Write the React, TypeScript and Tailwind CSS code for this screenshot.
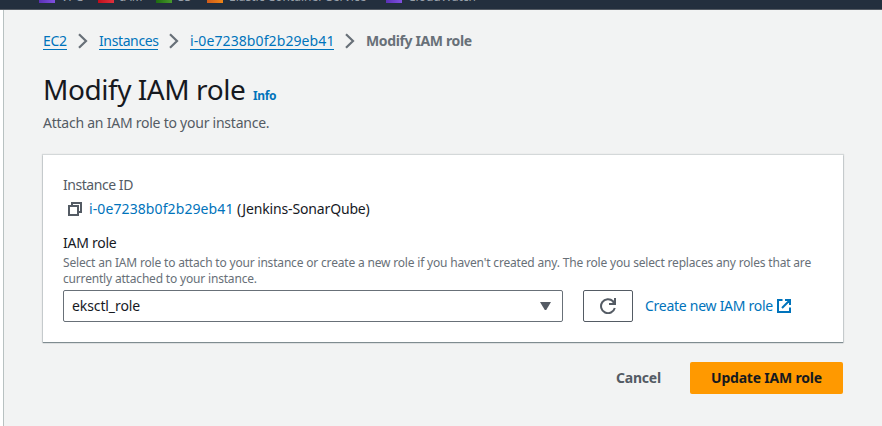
import React from "react";

const Chevron = () => (
  <svg className="mx-[11px] shrink-0" width="10" height="16" viewBox="0 0 10 16" fill="none" stroke="#687078" strokeWidth="2.2">
    <path d="M1 1.2 8 8 1 14.8" />
  </svg>
);

const services = [
  { label: "VPC", color: "from-[#5a30b5] to-[#8050e0]", box: "w-[59px]" },
  { label: "IAM", color: "from-[#c00c1a] to-[#e0303d]", box: "w-[58px]" },
  { label: "S3", color: "from-[#1d6b10] to-[#479a2c]", box: "w-[51px]" },
  { label: "Elastic Container Service", color: "from-[#cf5a1a] to-[#ee8516]", box: "w-[179px]" },
  { label: "CloudWatch", color: "from-[#5a30b5] to-[#8050e0]", box: "w-[100px]" },
];

const crumb = "mb-px h-[19px] border-b border-[#0073bb] whitespace-nowrap";

export default function App() {
  return (
    <div className="h-[426px] w-[882px] overflow-hidden bg-white font-['Noto_Sans',sans-serif] text-[14px] leading-[20px] text-[#16191f]">
      <header className="flex h-[10px] items-end overflow-hidden border-b border-[#545b64] bg-[#232f3e] pl-[39px]">
        {services.map((s) => (
          <div key={s.label} className={`flex h-[9px] shrink-0 items-end gap-[6px] pb-[6px] ${s.box}`}>
            <span className={`h-[16px] w-[16px] shrink-0 bg-linear-to-r ${s.color}`} />
            <span className="text-[12px] leading-[12px] whitespace-nowrap text-[#98a0aa]">{s.label}</span>
          </div>
        ))}
      </header>
      <main className="ml-[3px] h-[416px] border-l border-[#b8c1c1] bg-[#f2f3f3] pt-[21px] pl-[39px]">
        <nav className="flex h-[20px] items-center text-[#0073bb]">
          <a className={`${crumb} w-[24px] tracking-[-0.35px]`}>EC2</a>
          <Chevron />
          <a className={`${crumb} w-[59px] tracking-[-0.38px]`}>Instances</a>
          <Chevron />
          <a className={`${crumb} w-[144px] tracking-[0.1px]`}>i-0e7238b0f2b29eb41</a>
          <Chevron />
          <span className="font-bold tracking-[-0.37px] text-[#687078]">Modify IAM role</span>
        </nav>
        <div className="mt-[20px] flex h-[36px] items-baseline">
          <h1 className="w-[202px] text-[28px] leading-[36px] tracking-[-0.45px] whitespace-nowrap">Modify IAM role</h1>
          <a className="ml-2 text-[12px] font-bold tracking-[-0.4px] text-[#0073bb]">Info</a>
        </div>
        <p className="mt-[6px] tracking-[-0.24px] text-[#545b64]">Attach an IAM role to your instance.</p>
        <section className="mt-[22px] h-[187px] w-[800px] bg-white px-[20px] pt-[20px] shadow-[0_1px_1px_0_rgba(0,28,36,0.4),0_0_1px_1px_rgba(0,28,36,0.12)]">
          <div className="tracking-[-0.45px] text-[#545b64]">Instance ID</div>
          <div className="mt-1 flex items-center whitespace-nowrap">
            <svg className="ml-[4px] shrink-0" width="16" height="16" viewBox="0 0 16 16" fill="none" stroke="#545b64" strokeWidth="2">
              <path d="M2 5h9v9H2zM5 5V2h9v9h-3" />
            </svg>
            <span className="ml-[6px] w-[144px] tracking-[0.1px] text-[#0073bb]">i-0e7238b0f2b29eb41</span>
            <span className="ml-1 tracking-[-0.15px]">(Jenkins-SonarQube)</span>
          </div>
          <div className="mt-[14px] tracking-[-0.25px]">IAM role</div>
          <div className="mt-[2px] text-[12px] leading-[16px] tracking-[-0.18px] whitespace-nowrap text-[#687078]">
            <div>Select an IAM role to attach to your instance or create a new role if you haven't created any. The role you select replaces any roles that are</div>
            <div>currently attached to your instance.</div>
          </div>
          <div className="mt-[3px] flex h-[32px] items-center">
            <div className="flex h-[32px] w-[500px] items-center justify-between rounded-[2px] border border-[#687078] pr-[11px] pl-[8px]">
              <span className="tracking-[-0.1px]">eksctl_role</span>
              <svg width="11" height="8" viewBox="0 0 11 8"><path d="M0 0h11L6.2 8H4.8z" fill="#545b64" /></svg>
            </div>
            <button className="ml-[20px] flex h-[32px] w-[50px] items-center justify-center rounded-[2px] border border-[#545b64]">
              <svg width="16" height="16" viewBox="0 0 16 16" fill="none" stroke="#545b64" strokeWidth="2">
                <path d="M14.8 10A7 7 0 1 1 13 3.2L14.5 5" />
                <path d="M15 0v6H9" />
                <path d="M15 2v4h-4z" fill="#545b64" stroke="none" />
              </svg>
            </button>
            <a className="ml-[12px] w-[128px] tracking-[-0.27px] whitespace-nowrap text-[#0073bb]">Create new IAM role</a>
            <svg className="ml-[4px]" width="14" height="14" viewBox="0 0 14 14" fill="none" stroke="#0073bb" strokeWidth="2">
              <path d="M5.5 1H1v12h12V8.5M8 1h5v5M13 1 5 9" />
            </svg>
          </div>
        </section>
        <div className="mt-[20px] flex h-[32px] w-[800px] items-center justify-end font-bold">
          <button className="tracking-[-0.2px] text-[#545b64]">Cancel</button>
          <button className="ml-[29px] h-[32px] w-[153px] rounded-[2px] bg-[#ff9900] tracking-[-0.2px]">Update IAM role</button>
        </div>
      </main>
    </div>
  );
}
